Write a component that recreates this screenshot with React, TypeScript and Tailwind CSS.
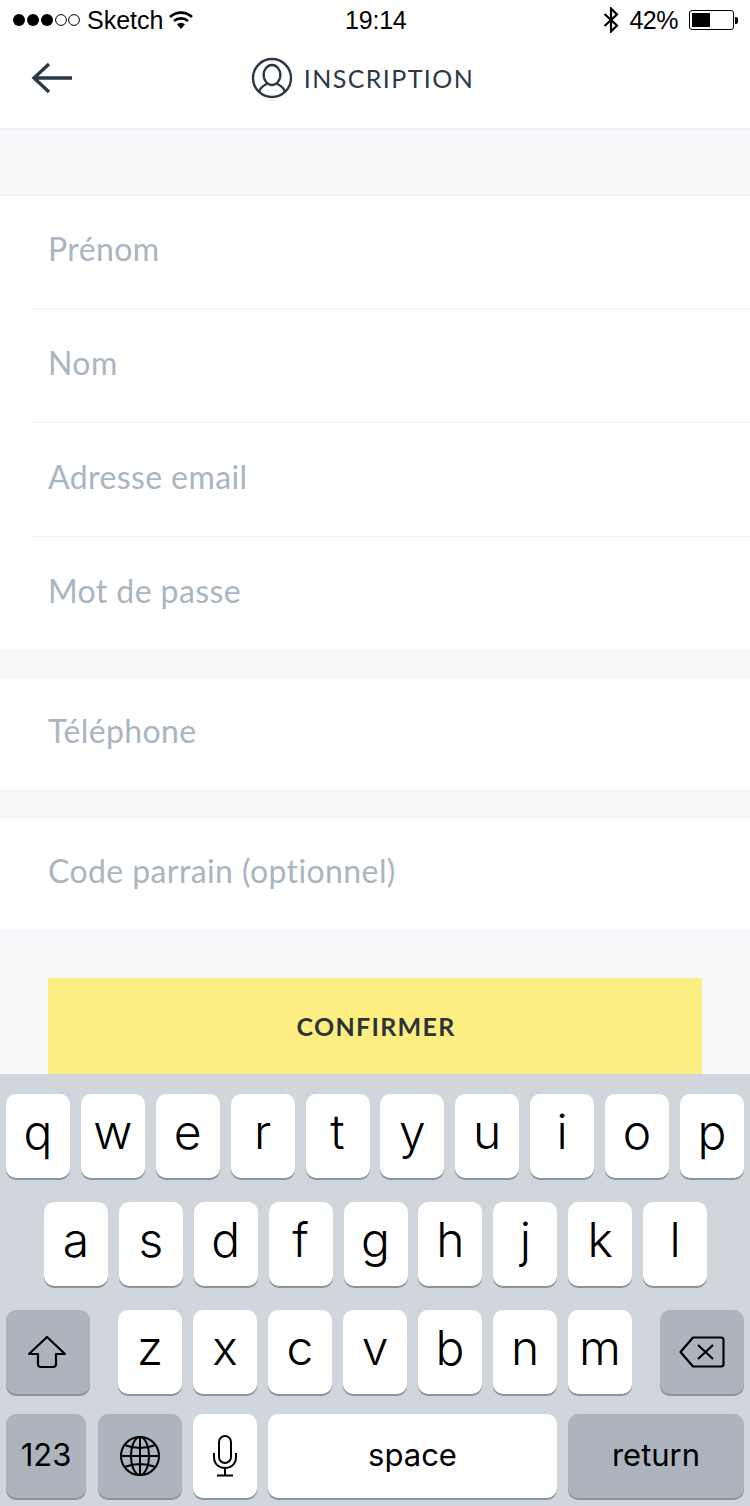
import type { ReactNode } from "react";

const STATUS_FONT = "font-['Liberation_Sans',Arial,sans-serif]";
const KEY_FONT = "font-['Inter',sans-serif] font-light";

function Field({ label, className, inset }: { label: string; className: string; inset?: boolean }) {
  return (
    <div className={`${inset ? "ml-[32px] border-b border-[#eef1f6]" : ""} ${className}`}>
      <span className={`block font-['Lato',sans-serif] text-[32px] leading-[40px] text-[#a9b5c0] tracking-[0.4px] ${inset ? "pl-[16px]" : "pl-[48px]"}`}>
        {label}
      </span>
    </div>
  );
}

function Key({ children, className = "w-[64px]", dark }: { children: ReactNode; className?: string; dark?: boolean }) {
  return (
    <div
      className={`h-[84px] shrink-0 rounded-[10px] flex items-center justify-center text-black shadow-[0_2px_0_#8e9299] ${
        dark ? "bg-[#acb4be]" : "bg-white"
      } ${className}`}
    >
      {children}
    </div>
  );
}

function Letter({ ch }: { ch: string }) {
  return (
    <Key>
      <span className={`${KEY_FONT} text-[48px] leading-none -translate-y-[4px]`}>{ch}</span>
    </Key>
  );
}

function Label({ text }: { text: string }) {
  return <span className={`${KEY_FONT} text-[31px] leading-none -translate-y-[2px] font-normal`}>{text}</span>;
}

export default function App() {
  return (
    <div className="w-[750px] h-[1506px] bg-[#f8f9fa] flex flex-col overflow-hidden">
      {/* status bar + header */}
      <div className="bg-white h-[130px] border-b-2 border-[#f1f3f8] shrink-0">
        <div className={`h-[40px] flex items-center justify-between pl-[12px] pr-[12px] text-black ${STATUS_FONT} relative`}>
          <div className="flex items-center">
            <svg width="68" height="14" viewBox="0 0 68 14">
              <circle cx="7" cy="7" r="6" fill="#000" />
              <circle cx="21" cy="7" r="6" fill="#000" />
              <circle cx="35" cy="7" r="6" fill="#000" />
              <circle cx="49" cy="7" r="5.4" fill="none" stroke="#000" strokeWidth="1" />
              <circle cx="62" cy="7" r="5.4" fill="none" stroke="#000" strokeWidth="1" />
            </svg>
            <span className="text-[25px] leading-[40px] ml-[7px]">Sketch</span>
            <svg className="ml-[6px]" width="24" height="18" viewBox="0 0 24 18">
              <path d="M1 6 A16 16 0 0 1 23 6" fill="none" stroke="#000" strokeWidth="2.6" />
              <path d="M5 10 A10.5 10.5 0 0 1 19 10" fill="none" stroke="#000" strokeWidth="2.6" />
              <path d="M8 13.2 A6 6 0 0 1 16 13.2 L12 18 Z" fill="#000" />
            </svg>
          </div>
          <span className="absolute left-[345px] top-0 text-[25px] leading-[40px] tracking-[-0.2px]">19:14</span>
          <div className="flex items-center">
            <svg width="16" height="26" viewBox="0 0 16 26">
              <path d="M1.5 7 L14 18.5 L8 24.5 V1.5 L14 7.5 L1.5 19" fill="none" stroke="#000" strokeWidth="2.2" />
            </svg>
            <span className="text-[25px] leading-[40px] ml-[10px] tracking-[-0.5px]">42%</span>
            <div className="ml-[11px] w-[45px] h-[20px] border border-black rounded-[3px] p-[2px] flex">
              <div className="w-[18px] bg-black" />
            </div>
            <div className="w-[3px] h-[7px] bg-black rounded-r-[2px] ml-[1px]" />
          </div>
        </div>
        <div className="h-[88px] relative flex items-center justify-center pb-[12px] pr-[25px]">
          <svg className="absolute left-[31px] top-[21px]" width="44" height="34" viewBox="0 0 44 34">
            <path d="M3 17 H41 M18 3 L3 17 L18 31" fill="none" stroke="#2b3846" strokeWidth="3.4" />
          </svg>
          <div className="flex items-center">
            <svg width="42" height="42" viewBox="0 0 42 42" fill="none" stroke="#2b3846" strokeWidth="2.4">
              <circle cx="21" cy="21" r="19" />
              <ellipse cx="21" cy="18" rx="8.4" ry="10" />
              <path d="M8 35 C9 30 13 28.5 16.5 26.5 M34 35 C33 30 29 28.5 25.5 26.5" />
            </svg>
            <span className="ml-[11px] font-['Lato',sans-serif] text-[25px] leading-[40px] tracking-[1.4px] text-[#2b3846]">
              INSCRIPTION
            </span>
          </div>
        </div>
      </div>

      <div className="h-[64px] shrink-0" />

      <div className="bg-white border-y-2 border-[#f1f3f8] shrink-0">
        <Field inset label="Prénom" className="h-[113px] pt-[33px]" />
        <Field inset label="Nom" className="h-[114px] pt-[34px]" />
        <Field inset label="Adresse email" className="h-[114px] pt-[34px]" />
        <Field label="Mot de passe" className="h-[113px] pt-[34px]" />
      </div>

      <div className="h-[24px] shrink-0" />

      <div className="bg-white border-y-2 border-[#f1f3f8] shrink-0">
        <Field label="Téléphone" className="h-[112px] pt-[33px]" />
      </div>

      <div className="h-[24px] shrink-0" />

      <div className="bg-white border-y-2 border-[#f1f3f8] shrink-0">
        <Field label="Code parrain (optionnel)" className="h-[112px] pt-[33px]" />
      </div>

      {/* confirm button, runs into the keyboard */}
      <div className="px-[48px] pt-[46px] shrink-0">
        <div className="h-[96px] bg-[#fdee82] flex items-center justify-center pl-[2px] pt-[2px]">
          <span className="font-['Lato',sans-serif] font-bold text-[25px] tracking-[1.3px] text-[#2b3338]">CONFIRMER</span>
        </div>
      </div>

      {/* keyboard */}
      <div className="flex-1 bg-[#d1d5dc] px-[6px] pt-[20px]">
        <div className="flex justify-between">
          {"qwertyuiop".split("").map((c) => (
            <Letter key={c} ch={c} />
          ))}
        </div>
        <div className="flex gap-[10.875px] px-[38px] mt-[24px]">
          {"asdfghjkl".split("").map((c) => (
            <Letter key={c} ch={c} />
          ))}
        </div>
        <div className="flex mt-[24px]">
          <Key dark className="w-[84px] mr-[28px]">
            <svg className="-translate-x-[1px]" width="40" height="34" viewBox="0 0 40 34" fill="none" stroke="#000" strokeWidth="2.2" strokeLinejoin="round">
              <path d="M20 2 L38 19 H29 V29 Q29 32 26 32 H14 Q11 32 11 29 V19 H2 Z" />
            </svg>
          </Key>
          <div className="flex gap-[11px]">
            {"zxcvbnm".split("").map((c) => (
              <Letter key={c} ch={c} />
            ))}
          </div>
          <Key dark className="w-[84px] ml-[28px]">
            <svg width="46" height="32" viewBox="0 0 46 32" fill="none" stroke="#000" strokeWidth="2.2" strokeLinejoin="round">
              <path d="M14 1.5 H42 Q44.5 1.5 44.5 4 V28 Q44.5 30.5 42 30.5 H14 L1.5 16 Z" />
              <path d="M19 9 L34 23 M34 9 L19 23" />
            </svg>
          </Key>
        </div>
        <div className="flex mt-[20px]">
          <Key dark className="w-[80px] mr-[12px]">
            <Label text="123" />
          </Key>
          <Key dark className="w-[84px] mr-[11px]">
            <svg width="40" height="40" viewBox="0 0 40 40" fill="none" stroke="#000" strokeWidth="2">
              <circle cx="20" cy="20" r="19" />
              <ellipse cx="20" cy="20" rx="9" ry="19" />
              <path d="M20 1 V39 M1 20 H39 M4.5 9 Q20 15 35.5 9 M4.5 31 Q20 25 35.5 31" />
            </svg>
          </Key>
          <Key className="w-[64px] mr-[11px]">
            <svg width="26" height="42" viewBox="0 0 26 42" fill="none" stroke="#000" strokeWidth="2">
              <rect x="7" y="1" width="12" height="27" rx="6" />
              <path d="M2 18 V22 C2 29 7 33 13 33 C19 33 24 29 24 22 V18 M13 33 V40 M5 40.5 H21" />
            </svg>
          </Key>
          <Key className="w-[289px] mr-[11px]">
            <Label text="space" />
          </Key>
          <Key dark className="w-[176px]">
            <Label text="return" />
          </Key>
        </div>
      </div>
    </div>
  );
}
